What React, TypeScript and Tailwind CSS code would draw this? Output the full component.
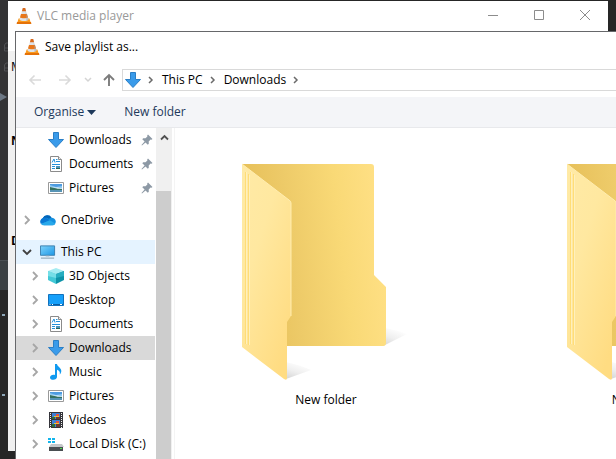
import type { ReactNode } from "react";

function Cone() {
  return (
    <svg width="16" height="18" viewBox="0 0 16 18" className="shrink-0" aria-hidden="true">
      <path d="M2.600 11.500h10.800L15 16.500H1z" fill="#fb9a1c" />
      <path d="M1 15h14l.4 2H.6z" fill="#e57208" />
      <path d="M6.800 1h2.400l3.300 11.800c-1.400 1.600-7.600 1.600-9 0z" fill="#dfe3e8" />
      <path d="M6.800 1h2.400l.9 3.200H5.900z" fill="#d9691a" />
      <path d="M5 7h6l1 3.400c-1.400 1-6.600 1-8 0z" fill="#e9771a" />
      <path d="M9.600 4.200l2.900 8.600-2 1z" fill="#9aa2ac" opacity=".5" />
    </svg>
  );
}

function DownArrow() {
  return (
    <svg width="16" height="16" viewBox="0 0 16 16" aria-hidden="true">
      <path d="M5.5.5h5v7h5L8 15.5.5 7.5h5z" fill="#3a9bea" stroke="#2b7fc6" />
    </svg>
  );
}

function DocumentIcon() {
  return (
    <svg width="16" height="16" viewBox="0 0 16 16" aria-hidden="true">
      <path d="M2.5.5h8l3 3v12h-11z" fill="#fff" stroke="#8b8b8b" />
      <path d="M10.5.5v3h3" fill="#eee" stroke="#8b8b8b" />
      <path d="M4 6.5L6 3l1 3.5M8 3.5h1.500M8 5.500h4M4 8.500h8M4 10.500h3M4 12.500h3" stroke="#2492dc" fill="none" />
      <path d="M8 10h4v3H8z" fill="#4b93bb" />
      <path d="M8 12h4v1H8z" fill="#2d6655" />
    </svg>
  );
}

function PictureIcon() {
  return (
    <svg width="16" height="16" viewBox="0 0 16 16" aria-hidden="true">
      <path d="M.5 2.500h15v11H.5z" fill="#fff" stroke="#999" />
      <path d="M2 4h12v8H2z" fill="#8ec7f0" />
      <path d="M2 4h12v2L8 7 2 5z" fill="#4d9be0" />
      <path d="M5 7.500h5l4 1v1H2V7z" fill="#e4f3fa" />
      <path d="M2 7c3 .3 5 1.800 12 2v1.500H2z" fill="#35705f" />
      <path d="M2 10h12v2H2z" fill="#5794b5" />
    </svg>
  );
}

function CloudIcon() {
  return (
    <svg width="17" height="16" viewBox="0 0 17 16" aria-hidden="true">
      <path d="M4 13a4 4 0 01-1-7 5.200 5.200 0 019.300-.5c2 0 4.500 1.500 4.500 4S15 13.500 13 13.500H4z" fill="#1490df" />
      <path d="M3 6a5.200 5.200 0 019.300-.5c-1 0-2 .4-2.800 1.200L7 5.700z" fill="#0364b8" />
      <path d="M3 6c2-.9 3.700-.2 5 .7l2.500 1.500L1 12.200A4 4 0 013 6z" fill="#0a78d4" />
      <path d="M1 12.200l9.500-4 5.800 3.700c-.8 1.200-2 1.600-3.300 1.600H4c-1.200 0-2.300-.5-3-1.300z" fill="#28a8ea" />
    </svg>
  );
}

function PcIcon() {
  return (
    <svg width="17" height="16" viewBox="0 0 17 16" aria-hidden="true">
      <defs>
        <linearGradient id="pc" x2="1" y2="1">
          <stop stopColor="#7fd3fb" />
          <stop offset="1" stopColor="#1c97e6" />
        </linearGradient>
      </defs>
      <path d="M.5 1.500h15v10H.5z" fill="url(#pc)" stroke="#3b7fae" />
      <path d="M6 12h4v1H6z" fill="#bcc7cf" />
      <path d="M1 14.500h14" stroke="#7e96a6" />
    </svg>
  );
}

function CubeIcon() {
  return (
    <svg width="16" height="16" viewBox="0 0 16 16" aria-hidden="true">
      <path d="M0 3l8-3 8 3-8 3z" fill="#a5ecf2" />
      <path d="M0 3l8 3v10l-8-4z" fill="#42c8d6" />
      <path d="M16 3L8 6v10l8-4z" fill="#0d93a8" />
      <path d="M0 3l8 3v4L0 8z" fill="#74dee7" />
      <path d="M16 3L8 6v4l8-2z" fill="#26adc0" />
    </svg>
  );
}

function DesktopIcon() {
  return (
    <svg width="16" height="16" viewBox="0 0 16 16" aria-hidden="true">
      <path d="M.5 2.500h15v11H.5z" fill="#16a0fa" stroke="#1272bd" />
      <path d="M1 12.500h14" stroke="#0a5da3" />
      <path d="M1.500 12.500h1M4 12.500h1M12 12.500h2" stroke="#fff" />
    </svg>
  );
}

function MusicIcon() {
  return (
    <svg width="16" height="16" viewBox="0 0 16 16" aria-hidden="true">
      <path d="M7 0h2c.2 2.500 4.500 4 4.300 7 0 1.600-.8 2.800-1.600 3.500.6-2.600-.3-4-2.700-4.800V13c0 1.600-1.800 2.800-3.700 2.800S2 15 2 13.500s1.600-2.700 3.400-2.700c.6 0 1.100.1 1.600.3z" fill="#109af0" />
    </svg>
  );
}

function VideoIcon() {
  return (
    <svg width="16" height="16" viewBox="0 0 16 16" aria-hidden="true">
      <path d="M1 0h14v16H1z" fill="#35353b" />
      <path d="M2.500 1v15M13.500 1v15" stroke="#f1f1f1" strokeDasharray="1 1" />
      <path d="M4 1h8v6H4zM4 8h8v7H4z" fill="#3d7fd4" />
      <path d="M4 5h3v2H4zM4 12h3v3H4z" fill="#2f6b36" />
      <path d="M8 2h3v2H8zM8 9h3v2H8z" fill="#e8523a" />
      <path d="M6 4h5v1H6zM6 11h5v1H6z" fill="#efbf34" />
      <path d="M8 5h4v2H8zM8 12h4v3H8z" fill="#6b3a34" />
    </svg>
  );
}

function DiskIcon() {
  return (
    <svg width="16" height="16" viewBox="0 0 16 16" aria-hidden="true">
      <path d="M0 2h3v2H0zM4 2h3v2H4zM0 5h3v2H0zM4 5h3v2H4z" fill="#12b5ec" />
      <path d="M3 8h11l2 3H1z" fill="#c4c7c9" />
      <path d="M1 11h14v4H1z" fill="#4a4e51" />
      <path d="M12 12.500h2" stroke="#4de052" />
    </svg>
  );
}

function Pin() {
  return (
    <svg width="12" height="12" viewBox="0 0 12 12" aria-hidden="true">
      <path d="M7 .5L11.500 5l-1 .8-.9-.2L7.700 7.500l.1 2.300-1 .9L4.500 8.400 1 11.500l-.5-.5L3.600 7.500 1.300 5.200l.9-1 2.300.1 1.900-1.900L6.200 1.500z" fill="#8d99a5" />
    </svg>
  );
}

function Chevron({ open = false }: { open?: boolean }) {
  return open ? (
    <svg width="10" height="10" viewBox="0 0 10 10" aria-hidden="true">
      <path d="M1 3l4 4 4-4" fill="none" stroke="#404040" strokeWidth="1.800" />
    </svg>
  ) : (
    <svg width="10" height="10" viewBox="0 0 10 10" aria-hidden="true">
      <path d="M3 1l4 4-4 4" fill="none" stroke="#a6a6a6" strokeWidth="1.800" />
    </svg>
  );
}

function CrumbChevron() {
  return (
    <svg width="6" height="8" viewBox="0 0 6 8" className="shrink-0" aria-hidden="true">
      <path d="M1 1l3 3-3 3" fill="none" stroke="#6b6b6b" strokeWidth="1.500" />
    </svg>
  );
}

type RowProps = { icon: ReactNode; label: string; top?: boolean; open?: boolean; pinned?: boolean; tone?: string };

function Row({ icon, label, top, open, pinned, tone = "" }: RowProps) {
  return (
    <li>
      <button type="button" className={`flex h-6 w-full items-center text-left ${top ? "pl-[6px]" : "pl-[14px]"} ${tone}`}>
        <span className="w-[10px]">{!pinned && <Chevron open={open} />}</span>
        <span className="ml-2 flex w-4 justify-center">{icon}</span>
        <span className="flex-1 pl-[5px] whitespace-nowrap">{label}</span>
        {pinned && <span className="pr-[2px]"><Pin /></span>}
      </button>
    </li>
  );
}

function Folder({ name }: { name: string }) {
  return (
    <button type="button" className="flex w-[302px] shrink-0 flex-col items-center">
      <svg width="172" height="228" viewBox="0 0 172 228" aria-hidden="true">
        <defs>
          <linearGradient id="back" x1="0" y1=".6" x2="1" y2=".45">
            <stop stopColor="#e5bd55" />
            <stop offset=".35" stopColor="#edca68" />
            <stop offset=".7" stopColor="#f9d976" />
            <stop offset="1" stopColor="#ffe085" />
          </linearGradient>
          <linearGradient id="front" x1="0" y1="0" x2=".7" y2="1">
            <stop stopColor="#ffeaa6" />
            <stop offset=".4" stopColor="#ffe8a0" />
            <stop offset="1" stopColor="#ffdc82" />
          </linearGradient>
          <linearGradient id="shade" x1="0" y1="1" x2=".5" y2="0">
            <stop stopColor="#d4d4d4" />
            <stop offset=".5" stopColor="#efefef" />
            <stop offset="1" stopColor="#fff" />
          </linearGradient>
        </defs>
        <path d="M145 168q12 2 22 6l-24 12z" fill="url(#shade)" />
        <path d="M46 202q14 3 25 8l-25 9z" fill="url(#shade)" />
        <path d="M2 4h129q3 0 3 3v108l12 12v56q0 3-3 3H2z" fill="url(#back)" />
        <path d="M2 4l47 36q2 1 2 3v113l-4 6v56q0 3-3 1L2 187z" fill="url(#front)" />
        <path d="M2 4l47 36q2 1 2 3v113" fill="none" stroke="#ffedb0" />
        <path d="M5.500 12v172M8.500 14v171" stroke="#ffdd77" />
        <path d="M6.500 12v172M9.500 15v170" stroke="#fff0bd" />
      </svg>
      <span className="h-6 leading-6">{name}</span>
    </button>
  );
}

function Dialog() {
  return (
    <section className="absolute top-[31px] right-0 bottom-0 left-[15px] flex flex-col overflow-hidden border-t border-l border-[#66676a] bg-white text-black">
      <header className="flex h-[30px] shrink-0 items-center gap-[5px] pl-2">
        <Cone />
        <h2>Save playlist as...</h2>
      </header>
      <div className="flex h-[35px] shrink-0 items-center pl-3">
        <div className="flex items-center">
          <button type="button" aria-label="Back" className="w-[30px]">
            <svg width="14" height="12" viewBox="0 0 14 12"><path d="M13 6H2M6.500 1.500L2 6l4.500 4.500" fill="none" stroke="#dadada" strokeWidth="1.600" /></svg>
          </button>
          <button type="button" aria-label="Forward" className="w-[26px]">
            <svg width="14" height="12" viewBox="0 0 14 12"><path d="M1 6h11M7.500 1.500L12 6l-4.500 4.500" fill="none" stroke="#dadada" strokeWidth="1.600" /></svg>
          </button>
          <button type="button" aria-label="Recent locations" className="w-[18px]">
            <svg width="8" height="6" viewBox="0 0 8 6"><path d="M1 1l3 3 3-3" fill="none" stroke="#d4d4d4" strokeWidth="1.500" /></svg>
          </button>
          <button type="button" aria-label="Up" className="w-5">
            <svg width="14" height="14" viewBox="0 0 14 14"><path d="M7 13V2M2 7l5-5 5 5" fill="none" stroke="#7c7c7c" strokeWidth="1.900" /></svg>
          </button>
        </div>
        <div className="flex h-[22px] flex-1 items-center border-y border-l border-[#d9d9d9] pl-[2px]">
          <DownArrow />
          <span className="pl-[7px]"><CrumbChevron /></span>
          <button type="button" className="pr-[7px] pl-2 whitespace-nowrap">This PC</button>
          <CrumbChevron />
          <button type="button" className="pr-[7px] pl-2 whitespace-nowrap">Downloads</button>
          <CrumbChevron />
        </div>
      </div>
      <div className="flex h-[31px] shrink-0 items-center gap-7 border-b border-[#e8e9ec] bg-[#f4f5f8] pl-[18px] text-[#1e395b]">
        <button type="button" className="flex items-center gap-[3px]">
          Organise
          <svg width="9" height="5" viewBox="0 0 9 5" aria-hidden="true"><path d="M0 0h9L4.500 5z" fill="#1e395b" /></svg>
        </button>
        <button type="button">New folder</button>
      </div>
      <div className="flex min-h-0 flex-1">
        <nav aria-label="Folders" className="w-[139px] shrink-0 overflow-hidden">
          <ul>
            <Row icon={<DownArrow />} label="Downloads" pinned />
            <Row icon={<DocumentIcon />} label="Documents" pinned />
            <Row icon={<PictureIcon />} label="Pictures" pinned />
          </ul>
          <ul className="py-2">
            <Row icon={<CloudIcon />} label="OneDrive" top />
          </ul>
          <ul>
            <Row icon={<PcIcon />} label="This PC" top open tone="bg-[#e5f3ff]" />
            <Row icon={<CubeIcon />} label="3D Objects" />
            <Row icon={<DesktopIcon />} label="Desktop" />
            <Row icon={<DocumentIcon />} label="Documents" />
            <Row icon={<DownArrow />} label="Downloads" tone="bg-[#d9d9d9]" />
            <Row icon={<MusicIcon />} label="Music" />
            <Row icon={<PictureIcon />} label="Pictures" />
            <Row icon={<VideoIcon />} label="Videos" />
            <Row icon={<DiskIcon />} label="Local Disk (C:)" />
          </ul>
        </nav>
        <div className="ml-px flex w-4 shrink-0 flex-col bg-[#f0f0f0]">
          <button type="button" aria-label="Scroll up" className="flex h-[18px] shrink-0 items-center justify-center">
            <svg width="9" height="7" viewBox="0 0 9 7"><path d="M1 5.500L4.500 2 8 5.500" fill="none" stroke="#505050" strokeWidth="1.800" /></svg>
          </button>
          <div className="mt-[45px] mr-px flex-1 bg-[#cdcdcd]" />
        </div>
        <main className="ml-[2px] flex min-w-0 flex-1 gap-[23px] overflow-hidden border-l border-[#f4f4f4] pt-8">
          <Folder name="New folder" />
          <Folder name="New folder (2)" />
        </main>
      </div>
    </section>
  );
}

export default function App() {
  return (
    <div className="relative h-screen w-full overflow-hidden bg-[#262626] font-['Open_Sans','Noto_Sans',sans-serif] text-xs">
      <div className="flex h-full w-2 flex-col bg-[#262626]">
        <div className="flex h-[260px] flex-col bg-[#333335] pt-[42px]">
          <svg width="8" height="80" viewBox="0 0 8 80" aria-hidden="true">
            <path d="M8 1H6L4.500 3v6H8M8 21H6l-1.500 2v6H8M5 6h3M5 26h3" fill="none" stroke="#505154" />
            <path d="M0 51l7 4-7 4z" fill="#6c7784" />
          </svg>
        </div>
        <div className="h-[30px] border-t border-[#4a4f53] bg-[#3b4043]" />
        <div className="flex flex-1 flex-col gap-[78px] pt-6 pl-[2px]">
          <i className="h-[2px] w-[3px] bg-[#8da6b8]" />
          <i className="h-[2px] w-[3px] bg-[#8da6b8]" />
        </div>
      </div>
      <section className="absolute top-px right-2 bottom-2 left-2 flex flex-col bg-[#f0f0f0]">
        <header className="flex h-[50px] shrink-0 items-start bg-white pl-2">
          <div className="flex h-[30px] flex-1 items-center gap-[5px] text-[#999]">
            <Cone />
            <h1>VLC media player</h1>
          </div>
          <div className="flex h-7 text-[#8c8c8c]">
            <button type="button" aria-label="Minimise" className="flex w-[46px] items-center justify-center">
              <svg width="10" height="10" viewBox="0 0 10 10"><path d="M0 5.500h10" stroke="currentColor" /></svg>
            </button>
            <button type="button" aria-label="Maximise" className="flex w-[46px] items-center justify-center">
              <svg width="10" height="10" viewBox="0 0 10 10"><path d="M.5.5h9v9h-9z" fill="none" stroke="currentColor" /></svg>
            </button>
            <button type="button" aria-label="Close" className="flex w-[46px] items-center justify-center">
              <svg width="10" height="10" viewBox="0 0 10 10"><path d="M0 0l10 10M10 0L0 10" stroke="currentColor" /></svg>
            </button>
          </div>
        </header>
        <div className="flex flex-col pt-2 pl-[3px] text-black">
          <span className="h-[74px]">M</span>
          <b className="h-[100px]">N</b>
          <b>D</b>
        </div>
      </section>
      <Dialog />
    </div>
  );
}
